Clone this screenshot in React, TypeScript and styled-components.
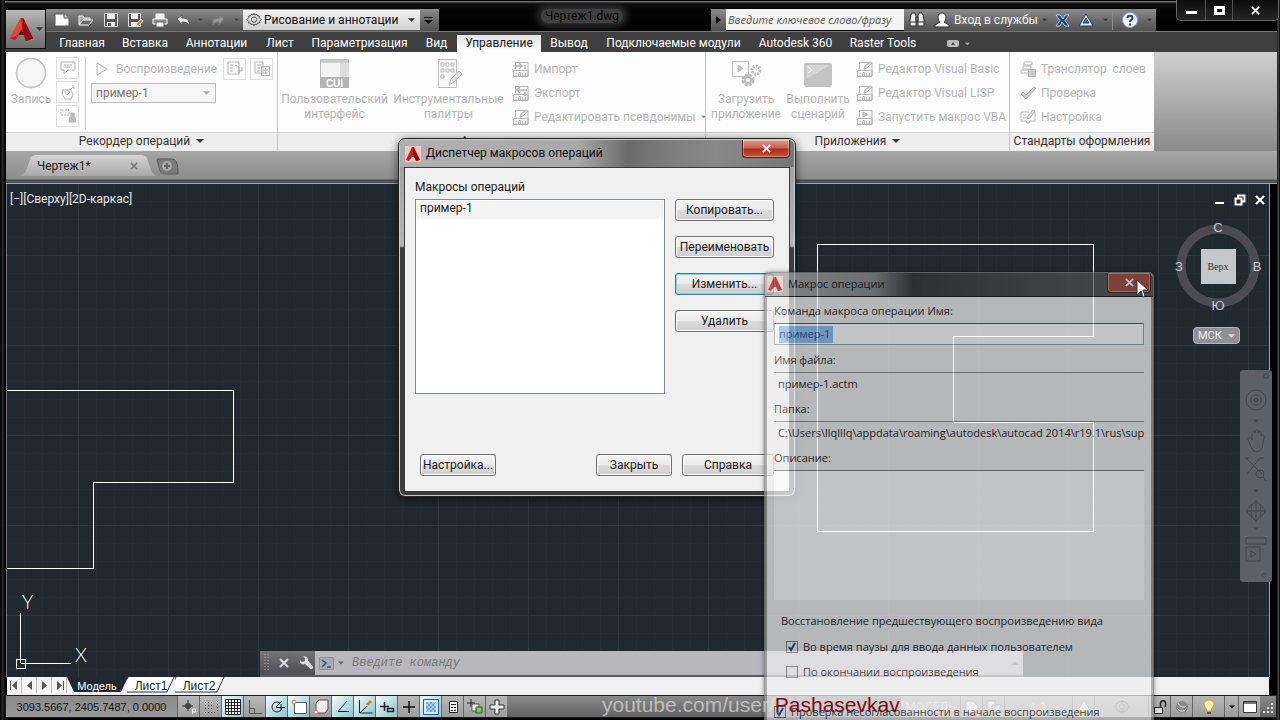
import React from "react";
import styled, { createGlobalStyle, css } from "styled-components";

const ui = `Roboto, "Open Sans", "Noto Sans", sans-serif`;
const humanist = `"Open Sans", "Noto Sans", sans-serif`;
const arial = `"Liberation Sans", Arial, sans-serif`;

const Global = createGlobalStyle`
  *, *::before, *::after { box-sizing: border-box; }
  body { margin: 0; background: #000; font-family: ${ui}; font-size: 12px; line-height: 16px; color: #222; }
  button, input, select, textarea { font: inherit; color: inherit; margin: 0; }
  svg { display: block; flex: none; }
`;

/* ---------- window frame ---------- */
const Desktop = styled.div`
  position: relative;
  display: flex;
  flex-direction: column;
  min-height: 100vh;
  overflow: hidden;
  padding: 0 3px 2px 5px;
  background: linear-gradient(90deg, #000 0, #2c2c2c 3px, #000 5px, #000 calc(100% - 3px), #555 calc(100% - 2px), #000 100%);
`;

const TitleBar = styled.header`
  display: flex;
  height: 32px;
  padding-top: 9px;
  background: linear-gradient(#000 0, #000 1px, #6e6e6e 1px, #6e6e6e 2px, #121212 3px, #050505 10px, #000 100%);
  border-bottom: 1px solid #777;
`;
const AppButton = styled.button`
  display: flex;
  align-items: center;
  justify-content: center;
  gap: 2px;
  position: relative;
  z-index: 2;
  width: 41px;
  height: 40px;
  flex: none;
  padding: 0;
  border: 1px solid #111;
  background: linear-gradient(#b9b9b9, #8f8f8f 50%, #6d6d6d);
`;
const ToolStrip = styled.div`
  display: flex;
  align-items: center;
  height: 22px;
  background: linear-gradient(#8c8c8c, #6c6c6c 50%, #505050);
`;
const QuickTools = styled(ToolStrip)`
  width: 393px;
  flex: none;
  padding-left: 4px;
`;
const ToolButton = styled.button<{ $w: number }>`
  display: flex;
  align-items: center;
  justify-content: center;
  width: ${(p) => p.$w}px;
  height: 22px;
  flex: none;
  padding: 0;
  border: 0;
  background: none;
`;
const Workspace = styled.label`
  display: flex;
  align-items: center;
  width: 177px;
  height: 20px;
  flex: none;
  padding: 0 5px 0 3px;
  gap: 2px;
  background: linear-gradient(#f2f2f2, #d0d0d0);
  color: #111;
`;
const BareSelect = styled.select`
  appearance: none;
  flex: 1;
  min-width: 0;
  padding: 0;
  border: 0;
  outline: 0;
  background: none;
`;
const DocTitle = styled.div`
  flex: 1;
  display: flex;
  justify-content: center;
  padding-left: 14px;
  line-height: 14px;
  color: #050505;
  span { height: 14px; padding: 0 4px; background: #404040; border-radius: 7px; box-shadow: 0 0 7px 4px #303030; }
`;
const SearchArrow = styled.button`
  width: 15px;
  height: 22px;
  padding: 0 4px;
  border: 0;
  background: linear-gradient(#8c8c8c, #505050);
`;
const Search = styled.input`
  width: 178px;
  height: 21px;
  padding: 0 2px;
  border: 0;
  background: #f4f4f4;
  font-family: ${humanist};
  font-size: 11px;
  font-style: italic;
  &::placeholder { color: #555; opacity: 1; }
`;
const InfoTools = styled(ToolStrip)`
  width: 252px;
  color: #f4f4f4;
`;
const StripLine = styled.span`
  width: 1px;
  height: 20px;
  background: #8b8b8b;
`;
const SignIn = styled.button`
  width: 84px;
  padding: 0;
  border: 0;
  background: none;
  color: #f4f4f4;
  white-space: nowrap;
`;
const WindowButtons = styled.div`
  display: flex;
  height: 21px;
  margin: -9px -2px 0 20px;
  border: 1px solid #6a6a6a;
  border-top: 0;
  border-radius: 0 0 5px 5px;
  background: linear-gradient(#0c0c0c, #252525);
`;
const WindowButton = styled.button<{ $w: number }>`
  display: flex;
  align-items: center;
  justify-content: center;
  width: ${(p) => p.$w}px;
  padding: 0;
  border: 0;
  border-right: 1px solid #555;
  background: none;
  &:last-child { border-right: 0; }
`;

/* ---------- ribbon ---------- */
const RibbonTabs = styled.nav`
  display: flex;
  height: 20px;
  padding-left: 45px;
  background: #3f3f3f;
`;
const RibbonTab = styled.button<{ $w: number; $active?: boolean }>`
  width: ${(p) => p.$w}px;
  height: 20px;
  padding: 2px 0 0;
  border: 0;
  background: none;
  color: #fff;
  white-space: nowrap;
  ${(p) => p.$active && css`
    height: 17px;
    margin: 3px 0 0;
    padding: 0 0 1px;
    background: linear-gradient(#e2e2e2, #fff);
    color: #222;
  `}
`;
const RibbonToggle = styled.button`
  display: flex;
  align-items: center;
  gap: 6px;
  margin-left: 22px;
  padding: 3px 0 0;
  border: 0;
  background: none;
`;
const Ribbon = styled.section`
  display: flex;
  height: 99px;
  margin-left: 1px;
  background: linear-gradient(#cecece, #8b8b8b);
  color: #b4b4b4;
`;
const Panel = styled.div<{ $w: number }>`
  display: flex;
  flex-direction: column;
  width: ${(p) => p.$w}px;
  flex: none;
  background: #fdfdfd;
  border-left: 1px solid #c4c4c4;
  &:first-child { border-left: 0; }
`;
const PanelBody = styled.div`
  display: flex;
  flex: 1;
  padding-top: 5px;
`;
const PanelTitle = styled.button`
  display: flex;
  align-items: center;
  justify-content: center;
  gap: 6px;
  height: 19px;
  padding: 0 0 2px;
  border: 0;
  border-top: 1px solid #d2d2d2;
  background: #eee;
  color: #333;
  white-space: nowrap;
`;
const BigButton = styled.button<{ $w: number }>`
  display: flex;
  flex-direction: column;
  align-items: center;
  width: ${(p) => p.$w}px;
  flex: none;
  padding: 0;
  border: 0;
  background: none;
  line-height: 15px;
  svg { margin-bottom: 3px; }
`;
const Column = styled.div<{ $pad?: number; $gap?: number }>`
  display: flex;
  flex-direction: column;
  gap: ${(p) => p.$gap ?? 0}px;
  padding-left: ${(p) => p.$pad ?? 0}px;
`;
const ListButton = styled.button`
  display: flex;
  align-items: center;
  gap: 5px;
  height: 24px;
  padding: 0;
  border: 0;
  background: none;
  white-space: pre;
`;
const MiniButton = styled.button`
  display: flex;
  align-items: center;
  justify-content: center;
  width: 23px;
  height: 22px;
  flex: none;
  padding: 0;
  border: 1px solid #dedede;
  background: #fcfcfc;
`;
const Divider = styled.span`
  width: 1px;
  height: 72px;
  margin: 0 5px 0 6px;
  background: #ccc;
`;
const PlayRow = styled.div`
  display: flex;
  align-items: center;
  gap: 4px;
  height: 23px;
`;
const PlayButton = styled(ListButton)`
  width: 128px;
  padding-left: 4px;
  gap: 7px;
`;
const MacroSelect = styled.label`
  display: flex;
  align-items: center;
  width: 125px;
  height: 20px;
  padding: 0 5px 0 4px;
  border: 1px solid #bbb;
  background: #f6f6f6;
  color: #777;
`;

/* ---------- drawing tabs and canvas ---------- */
const FileTabs = styled.nav`
  display: flex;
  align-items: flex-end;
  height: 33px;
  margin-left: 1px;
  padding: 0 0 7px 14px;
  border-bottom: 1px solid #a5a5a5;
  background: linear-gradient(#a6a6a6 0, #8c8c8c 28px, #4a4d50 29px, #55585c 100%);
`;
const FileTab = styled.div`
  position: relative;
  display: flex;
  align-items: center;
  justify-content: space-between;
  width: 136px;
  height: 21px;
  padding: 0 18px 0 17px;
  color: #222;
  background: linear-gradient(#d4d4d4, #a8a8a8);
  clip-path: polygon(0 100%, 4% 82%, 8% 10%, 11% 0, 90% 0, 93% 10%, 97% 82%, 100% 100%);
`;
const IconButton = styled.button`
  display: flex;
  padding: 0;
  border: 0;
  background: none;
`;
const Canvas = styled.main`
  position: relative;
  flex: 1;
  min-height: 480px;
  margin: 0 8px 0 2px;
  background-color: #212830;
  background-image:
    repeating-linear-gradient(90deg, transparent 0 71px, #2d3742 71px 72px, transparent 72px 90px),
    repeating-linear-gradient(0deg, transparent 0 61px, #2d3742 61px 62px, transparent 62px 90px),
    repeating-linear-gradient(90deg, transparent 0 17px, #242d36 17px 18px),
    repeating-linear-gradient(0deg, transparent 0 7px, #242d36 7px 8px, transparent 8px 18px);
  box-shadow: 1px 0 0 #a0a0a0, -1px 0 0 #777;
  color: #eee;
`;
const Drawing = styled.svg`
  position: absolute;
  left: 0;
  top: 0;
`;
const UcsIcon = styled.svg`
  position: absolute;
  left: 0;
  bottom: 0;
`;
const ViewLabel = styled.button`
  position: absolute;
  left: 3px;
  top: 7px;
  padding: 0;
  border: 0;
  background: none;
  color: #e8e8e8;
`;
const ViewControls = styled.div`
  position: absolute;
  right: 3px;
  top: 10px;
  display: flex;
  gap: 8px;
`;
const ViewCube = styled.svg`
  position: absolute;
  right: 4px;
  top: 34px;
`;
const UcsMenu = styled.button`
  position: absolute;
  right: 29px;
  top: 143px;
  display: flex;
  align-items: center;
  justify-content: space-between;
  width: 47px;
  height: 17px;
  padding: 0 4px;
  border: 1px solid #b5b5bd;
  border-radius: 4px;
  background: #8f8f98;
  color: #eee;
  font-size: 11px;
`;
const NavBar = styled.div`
  position: absolute;
  right: -3px;
  top: 186px;
  width: 32px;
  height: 212px;
  border-radius: 3px;
  background: #5b6069;
`;
const CommandLine = styled.div`
  position: absolute;
  left: 253px;
  right: 246px;
  bottom: 0;
  display: flex;
  height: 26px;
  border-bottom: 2px solid #5c5c5c;
  background: #b7b7bd;
`;
const CommandTools = styled.div`
  display: flex;
  align-items: center;
  gap: 10px;
  width: 55px;
  padding-left: 4px;
  background: linear-gradient(#74747a, #4c4c52);
`;
const CommandPrompt = styled.label`
  display: flex;
  flex: 1;
  align-items: center;
  gap: 4px;
  padding: 0 4px;
`;
const CommandInput = styled.input`
  flex: 1;
  min-width: 0;
  padding: 0 4px;
  border: 0;
  outline: 0;
  background: none;
  font-family: "Liberation Mono", monospace;
  font-style: italic;
  &::placeholder { color: #777; opacity: 1; }
`;

/* ---------- bottom bars ---------- */
const LayoutTabs = styled.nav`
  display: flex;
  height: 18px;
  margin: 0 8px 0 2px;
  background: #f0f0f0;
  font-family: ${arial};
`;
const NavArrow = styled.button`
  display: flex;
  align-items: center;
  justify-content: center;
  width: 15px;
  height: 16px;
  padding: 0;
  border: 0;
  border-right: 1px solid #bbb;
  background: #f4f4f4;
`;
const LayoutTab = styled.button<{ $active?: boolean }>`
  position: relative;
  height: 17px;
  width: ${(p) => (p.$active ? 60 : 48)}px;
  padding: 0;
  border: 0;
  background: none;
  font-size: ${(p) => (p.$active ? 11 : 12)}px;
  color: ${(p) => (p.$active ? "#fff" : "#222")};
  svg { position: absolute; left: 0; top: 0; }
  span { position: relative; }
`;
const StatusBar = styled.footer`
  display: flex;
  align-items: center;
  height: 23px;
  border: 1px solid #1c1c1c;
  background: linear-gradient(#8a8a8a, #626262);
`;
const Coordinates = styled.button`
  width: 171px;
  height: 21px;
  padding: 0;
  border: 0;
  background: linear-gradient(#8a8a8a, #989898);
  font-family: ${arial};
  font-size: 11px;
  color: #111;
`;
const StatusButton = styled.button<{ $on?: boolean; $w?: number }>`
  display: flex;
  align-items: center;
  justify-content: center;
  width: ${(p) => p.$w ?? 22}px;
  height: 21px;
  flex: none;
  padding: 0;
  border: 0;
  border-left: 1px solid #666;
  color: #ddd;
  background: ${(p) => (p.$on ? "linear-gradient(135deg, #f2fafb, #8fc3cf)" : "linear-gradient(#b8b8b8, #9c9c9c)")};
`;
const StatusGroup = styled.div`
  display: flex;
  align-items: center;
`;
const StatusEnd = styled(StatusGroup)`
  margin-left: auto;
`;
const Watermark = styled.a`
  position: absolute;
  left: 602px;
  bottom: 3px;
  z-index: 5;
  font-family: ${arial};
  font-size: 21px;
  line-height: 24px;
  text-decoration: none;
  color: rgba(235, 235, 235, 0.6);
  span { color: #7c0a1c; }
`;

/* ---------- dialogs ---------- */
const Dialog = styled.section<{ $x: number; $y: number; $w: number; $faded?: boolean }>`
  position: absolute;
  left: ${(p) => p.$x}px;
  top: ${(p) => p.$y}px;
  z-index: 3;
  width: ${(p) => p.$w}px;
  padding: 0 5px 4px;
  border: 1px solid #222;
  border-radius: 7px;
  box-shadow: inset 0 0 0 1px #c8c8c8, 0 2px 10px rgba(0, 0, 0, 0.6);
  background: linear-gradient(#999 0, #aaa 60px, #b5b5b5 107px, #3d3d3d 109px);
  color: #1c1c1c;
  ${(p) => p.$faded && css`
    opacity: 0.72;
    padding: 0 2px 4px;
    border-color: #777;
    border-radius: 5px;
    box-shadow: 0 0 4px rgba(0, 0, 0, 0.6);
    background: #999;
    font-family: ${humanist};
    font-size: 11px;
  `}
`;
const DialogTitle = styled.header<{ $faded?: boolean }>`
  display: flex;
  align-items: flex-start;
  gap: 5px;
  height: ${(p) => (p.$faded ? 24 : 27)}px;
  margin: 1px -4px 0;
  padding: 0 0 0 5px;
  border-radius: 6px 6px 0 0;
  background: linear-gradient(90deg, #b0b0b0 0, #a9a9a9 45%, #6b6b6b 58%, #7d7d7d 68%, #888 80%, #777 100%);
  ${(p) => p.$faded && css`
    margin: 0 -2px;
    padding-left: 2px;
    border-bottom: 1px solid #111;
    background: linear-gradient(90deg, #aaa 0, #888 28%, #333 38%, #484848 70%, #555 100%);
  `}
`;
const DialogName = styled.h2<{ $faded?: boolean }>`
  flex: 1;
  margin: ${(p) => (p.$faded ? 3 : 5)}px 0 0;
  font-size: inherit;
  font-weight: 400;
  line-height: 16px;
  color: #111;
`;
const DialogLogo = styled.span<{ $faded?: boolean }>`
  margin-top: ${(p) => (p.$faded ? 3 : 6)}px;
`;
const CloseButton = styled.button<{ $faded?: boolean }>`
  display: flex;
  align-items: center;
  justify-content: center;
  width: ${(p) => (p.$faded ? 44 : 48)}px;
  height: 18px;
  margin-right: 4px;
  padding: 0;
  border: 1px solid #4a1d18;
  border-top: 0;
  border-radius: 0 0 4px 4px;
  box-shadow: inset 0 0 0 1px rgba(255, 255, 255, 0.35);
  background: linear-gradient(#d99b90 0, #c6614f 48%, #b22c16 52%, #c5543a 100%);
  ${(p) => p.$faded && css`
    height: 20px;
    margin-right: 2px;
    background: #a04a40;
  `}
`;
const DialogBody = styled.div`
  display: flex;
  flex-direction: column;
  padding: 10px 15px 15px 10px;
  border: 1px solid #3a3a3a;
  background: #f0f0f0;
`;
const MacroHeading = styled.label`
  line-height: 18px;
`;
const MacroRow = styled.div`
  display: flex;
  justify-content: space-between;
  margin-top: 3px;
`;
const MacroList = styled.select`
  appearance: none;
  width: 250px;
  height: 195px;
  padding: 1px;
  border: 1px solid #828790;
  border-radius: 0;
  outline: 0;
  background: #fff;
  option { min-height: 18px; padding: 0 3px; line-height: 18px; background: #f3f3f3; color: #1c1c1c; }
`;
const PushButton = styled.button<{ $w: number; $focus?: boolean }>`
  width: ${(p) => p.$w}px;
  height: 22px;
  padding: 0;
  border: 1px solid ${(p) => (p.$focus ? "#2e7f92" : "#707070")};
  border-radius: 3px;
  box-shadow: inset 0 0 0 1px ${(p) => (p.$focus ? "#8fd6e6" : "#fbfbfb")};
  background: linear-gradient(#f3f3f3 0, #ebebeb 48%, #dcdcdc 52%, #cfcfcf 100%);
  line-height: 18px;
  white-space: nowrap;
`;
const DialogActions = styled.div`
  display: flex;
  gap: 10px;
  margin: 60px 0 0 5px;
  button:first-child { margin-right: auto; }
`;

const MacroForm = styled.form`
  display: flex;
  flex-direction: column;
  height: 440px;
  padding: 2px 7px 0;
  background: #eee;
`;
const Field = styled.label`
  display: flex;
  flex-direction: column;
  margin-bottom: 3px;
  line-height: 24px;
`;
const FieldInput = styled.input<{ $plain?: boolean }>`
  height: 22px;
  padding: 0 4px;
  border: 1px solid #999;
  outline: 0;
  background: #fff;
  ${(p) => p.$plain && css`
    padding: 0 0 0 4px;
    border-width: 1px 0 0;
    border-color: #888;
    background: none;
  `}
`;
const SelectedField = styled.div`
  display: flex;
  align-items: center;
  height: 22px;
  padding: 0 4px;
  border: 1px solid #8aa;
  border-top-color: #456;
  background: #fff;
  input { width: 54px; height: 17px; padding: 0; border: 0; outline: 0; background: #8fbdf0; color: #1e4a90; }
`;
const Description = styled.textarea`
  height: 130px;
  border: 0;
  border-top: 1px solid #777;
  outline: 0;
  resize: none;
  background: #fff;
`;
const Restore = styled.fieldset`
  margin: 5px 0 0;
  padding: 0 0 0 12px;
  border: 0;
`;
const RestoreTitle = styled.legend`
  margin-left: -7px;
  padding: 0 0 0 2px;
  line-height: 26px;
`;
const CheckRow = styled.label`
  display: flex;
  align-items: center;
  gap: 5px;
  height: 25px;
`;
const CheckLast = styled(CheckRow)`
  margin-top: 15px;
`;
const Check = styled.input`
  appearance: none;
  width: 12px;
  height: 12px;
  border: 1px solid #777;
  background: #eee;
  &:checked {
    background: #eee url("data:image/svg+xml,%3Csvg xmlns='http://www.w3.org/2000/svg' viewBox='0 0 10 10'%3E%3Cpath d='M2 5l2 3 4-7' fill='none' stroke='%23203a80' stroke-width='2'/%3E%3C/svg%3E");
  }
`;
const Pointer = styled.svg`
  position: absolute;
  left: 1135px;
  top: 279px;
  z-index: 6;
`;

/* ---------- drawings ---------- */
type IconProps = { w?: number; h?: number; box?: string; children: React.ReactNode; stroke?: string; fill?: string };
const Icon = ({ w = 16, h = 16, box, children, stroke = "none", fill = "none" }: IconProps) => (
  <svg width={w} height={h} viewBox={box ?? `0 0 ${w} ${h}`} stroke={stroke} fill={fill} aria-hidden>
    {children}
  </svg>
);
const Caret = ({ color = "#333", w = 7 }: { color?: string; w?: number }) => (
  <Icon w={w} h={4} box="0 0 8 4" fill={color}><path d="M0 0h8L4 4z" /></Icon>
);
const Cross = ({ color = "#fff", size = 9, width = 2 }: { color?: string; size?: number; width?: number }) => (
  <Icon w={size} h={size} box="0 0 10 10" stroke={color}><path d="M1 1l8 8M9 1L1 9" strokeWidth={width} /></Icon>
);
const Logo = ({ size = 26 }: { size?: number }) => (
  <Icon w={size} h={size} box="0 0 26 28">
    <path d="M12 1h3l11 23-8 3-3-7h-5l-4 6-6-2z" fill="#c9201b" />
    <path d="M12 1l2 12-5 7-9 4z" fill="#e6453a" />
    <path d="M15 1l11 23-8 3-4-14z" fill="#8d0f10" />
    <path d="M10 20l3-6 3 6z" fill="#4e0808" />
  </Icon>
);
const BadgeLogo = () => (
  <Icon w={16} h={16}>
    <path d="M0 0h16v16H0z" fill="#e9c9c7" />
    <path d="M7 1h2l6 13-4 1-2-4H7l-3 4-3-1z" fill="#c4201d" />
    <path d="M8 1l7 13-4 1-3-7z" fill="#7f0d0e" />
  </Icon>
);
const gearPath = "M8 1l1 2 2-1 1 2 2 0v2l2 2-2 2v2l-2 0-1 2-2-1-1 2-1-2-2 1-1-2-2 0v-2L0 8l2-2V4l2 0 1-2 2 1z";
const Gear = ({ color = "#444", size = 16 }: { color?: string; size?: number }) => (
  <Icon w={size} h={size} box="-1 0 18 17" stroke={color}><path d={gearPath} /><circle cx="8" cy="8" r="3" /></Icon>
);
const Doc = ({ kind }: { kind: "import" | "export" | "edit" | "run" }) => (
  <Icon w={16} h={16} stroke="#b4b4b4">
    <path d="M2.500 8V1.500h12.500V15M.500 9.500h14.500v6H.500z" />
    <path d="M3 15v-3.500M5.500 15v-3.500h2V15M9.500 11.500V15h3v-3.500" />
    {kind === "import" && <path d="M0 5h8M6 2l3 3-3 3M12 4v4" strokeWidth="1.500" />}
    {kind === "export" && <path d="M5 5h9M7 2L4 5l3 3M12 7v4" strokeWidth="1.500" />}
    {kind === "edit" && <path d="M7 8l1-3 5-4 2 1-5 5z" fill="#ddd" />}
    {kind === "run" && <path d="M6 3v5l5-2.500z" fill="#c4c4c4" />}
  </Icon>
);

const QuickIcons = () => (
  <>
    <ToolButton $w={24} aria-label="Создать"><Icon w={16} h={14}><path d="M1 1h9l5 4v8H1z" fill="#fff" stroke="#555" /><path d="M10 1v4h5" fill="#ccc" stroke="#555" /></Icon></ToolButton>
    <ToolButton $w={24} aria-label="Открыть"><Icon w={16} h={13}><path d="M1 11V2h4l1 2h6v2" fill="#aaa" stroke="#eee" /><path d="M1 11l4-5h10l-4 5z" fill="#666" stroke="#fff" /></Icon></ToolButton>
    <ToolButton $w={25} aria-label="Сохранить"><Icon w={14} h={14}><path d="M.5.500h13v13H.500z" fill="#555" stroke="#ddd" /><path d="M3 1h8v5H3zM3 9h8v4H3z" fill="#eee" /><path d="M4 10h3v3H4z" fill="#555" /></Icon></ToolButton>
    <ToolButton $w={25} aria-label="Сохранить как"><Icon w={16} h={15}><path d="M.5.500h12v13H.500z" fill="#555" stroke="#ddd" /><path d="M3 1h7v5H3zM3 9h6v4H3z" fill="#eee" /><path d="M8 13l1-3 4-4 2 2-4 4z" fill="#c77f4a" stroke="#eed" /></Icon></ToolButton>
    <ToolButton $w={23} aria-label="Печать"><Icon w={16} h={15}><path d="M4 1h8v5H4z" fill="#eee" stroke="#fff" /><path d="M1 6h14v5H1z" fill="#888" stroke="#fff" /><path d="M4 9h8v5H4z" fill="#fff" stroke="#666" /></Icon></ToolButton>
    <ToolButton $w={24} aria-label="Отменить"><Icon w={15} h={13}><path d="M1 5l5-4v3c5 0 8 2 7 8-1-3-3-4-7-4v3z" fill="#eee" stroke="#555" /></Icon></ToolButton>
    <ToolButton $w={11} aria-label="Список отмены"><Caret color="#444" w={5} /></ToolButton>
    <ToolButton $w={24} aria-label="Повторить"><Icon w={14} h={12}><path d="M13 5L8 1v3C3 4 1 6 2 11c1-2 2-3 6-3v3z" fill="#999" stroke="#777" /></Icon></ToolButton>
    <ToolButton $w={13} aria-label="Список повтора"><Caret color="#444" w={5} /></ToolButton>
  </>
);

const tabs: [string, number][] = [
  ["Главная", 64], ["Вставка", 62], ["Аннотации", 81], ["Лист", 46], ["Параметризация", 113], ["Вид", 41],
  ["Управление", 84], ["Вывод", 56], ["Подключаемые модули", 153], ["Autodesk 360", 91], ["Raster Tools", 84],
];

const statusIcons: { name: string; on?: boolean; art: React.ReactNode }[] = [
  { name: "Выведенные зависимости", art: <g stroke="#222"><path d="M1 7h11M7 1v11M5 5h4v4H5z" /><path d="M11.500 15v-5h3v3h-3" stroke="#eee" /></g> },
  { name: "Шаг", art: <path d="M2 3.500h9M2 6.500h9M2 9.500h9M2 13.500h12M14.500 2v10" stroke="#222" strokeDasharray="1 2" /> },
  { name: "Сетка", on: true, art: <path d="M.5.500h15v15H.500zM3.500 0v16M6.500 0v16M9.500 0v16M12.500 0v16M0 3.500h16M0 6.500h16M0 9.500h16M0 12.500h16" stroke="#222" fill="#fff" /> },
  { name: "Орто", art: <path d="M2.500 1v13.500H15M2.500 9.500h5v5" stroke="#555" /> },
  { name: "Полярное", on: true, art: <path d="M13 8a5 5 0 1 1-2-4M7 8l6-6M7 8.500h9M12 5v6" stroke="#222" /> },
  { name: "Привязка", on: true, art: <g><path d="M3.500 3.500h12v11h-12z" fill="#fff" stroke="#555" /><circle cx="3" cy="3" r="2" fill="#fff" stroke="#b87a4a" /></g> },
  { name: "3D привязка", art: <g><path d="M3 4l3-3h9v9l-3 4H3z" fill="#eee" stroke="#555" /><circle cx="3" cy="13" r="2" fill="#fff" stroke="#c77f4a" /></g> },
  { name: "Отслеживание", on: true, art: <path d="M12 2L3 12.500h11" stroke="#222" /> },
  { name: "ДПСК", on: true, art: <g stroke="#222"><path d="M2.500 1v13h13M3 14L10 7" /><path d="M10 6l4-4" stroke="#d98b2b" strokeWidth="3" /></g> },
  { name: "Динамический ввод", on: true, art: <path d="M1 7.500h9M5.500 3v9M8.500 9.500h6v3h-6z" stroke="#222" strokeWidth="1.500" /> },
  { name: "Вес линий", art: <path d="M2 8h12M8 2v12" stroke="#111" strokeWidth="1.500" /> },
  { name: "Прозрачность", on: true, art: <g><path d="M.5.500h15v15H.500z" fill="#dcecf8" stroke="#1f5f9a" /><path d="M3 3h10v10H3z" fill="#a4cdf0" /><path d="M3 5l2-2M3 9l6-6M3 13L13 3M7 13l6-6M11 13l2-2M3 3l10 10M3 7l6 6M7 3l6 6" stroke="#6ea2d0" /></g> },
  { name: "Быстрые свойства", art: <g><path d="M4.500 2.500h8v11h-8z" fill="#fff" stroke="#222" /><path d="M6 5.500h5M6 8.500h2M9 8.500h2M6 11.500h2M9 11.500h2" stroke="#222" /></g> },
  { name: "Циклический выбор", art: <g><path d="M0 4h8M4 0v8" stroke="#222" /><path d="M5 5h7v7H5z" fill="#eee" stroke="#555" /><path d="M9 8h6v6H9z" fill="#7fbf6a" stroke="#2b5a24" /></g> },
  { name: "Монитор аннотаций", art: <path d="M6 1h4v5h5v4h-5v5H6v-5H1V6h5z" fill="#f2f2f2" stroke="#333" /> },
];

export default function App() {
  return (
    <>
      <Global />
      <Desktop>
        <TitleBar>
          <AppButton aria-label="Меню приложения"><Logo size={25} /><Caret w={7} /></AppButton>
          <QuickTools>
            <QuickIcons />
            <Workspace>
              <Gear />
              <BareSelect aria-label="Рабочее пространство"><option>Рисование и аннотации</option></BareSelect>
              <Caret />
            </Workspace>
            <ToolButton $w={17} aria-label="Настройка панели"><Icon w={9} h={7} fill="#111"><path d="M0 0h9v1H0zM0 3h9L4.500 7z" /></Icon></ToolButton>
          </QuickTools>
          <DocTitle><span>Чертеж1.dwg</span></DocTitle>
          <SearchArrow aria-label="Свернуть поиск"><Icon w={6} h={8} fill="#111"><path d="M1 0l5 4-5 4z" /></Icon></SearchArrow>
          <Search aria-label="Поиск" placeholder="Введите ключевое слово/фразу" />
          <InfoTools>
            <ToolButton $w={25} aria-label="Найти"><Icon w={16} h={16} fill="#eee" stroke="#333"><path d="M2 3l1-2h3l1 3v10H1V8zM14 3l-1-2h-3L9 4v10h6V8zM7 5h2v4H7zM1 10h6M9 10h6" /></Icon></ToolButton>
            <ToolButton $w={25} aria-label="Профиль"><Icon w={16} h={16} fill="#f4f4f4" stroke="#333"><path d="M8 1c3 0 4 2 4 4 0 3-1 4-2 5l5 3v2H1v-2l5-3C5 9 4 8 4 5c0-2 1-4 4-4z" /></Icon></ToolButton>
            <SignIn>Вход в службы</SignIn>
            <ToolButton $w={12} aria-label="Меню входа"><Caret color="#333" w={5} /></ToolButton>
            <ToolButton $w={24} aria-label="Exchange"><Icon w={15} h={13}><path d="M1 1h4l3 4 2-4h4l-4 5.500 4 5.500h-4L7 8l-2 4H1l4-5.500z" fill="#1f3f86" stroke="#b9cbea" /></Icon></ToolButton>
            <ToolButton $w={24} aria-label="Autodesk 360"><Icon w={16} h={14}><path d="M8 1l3 5 4 7H1l4-7zM8 5l-3 5h6z" fill="#dfe8f8" stroke="#1f3f86" fillRule="evenodd" /></Icon></ToolButton>
            <ToolButton $w={14} aria-label="Ещё"><Caret color="#333" w={5} /></ToolButton>
            <StripLine />
            <ToolButton $w={34} aria-label="Справка"><Icon w={16} h={16}><circle cx="8" cy="8" r="7.500" fill="#f0f5ff" stroke="#8ba3cf" /><path d="M5.500 6c0-3 5-3 5 0 0 2-2.500 2-2.500 4M8 11.500v2" stroke="#1f3f86" strokeWidth="2" /></Icon></ToolButton>
            <Caret color="#333" w={5} />
          </InfoTools>
          <WindowButtons>
            <WindowButton $w={29} aria-label="Свернуть"><Icon w={11} h={8} fill="#fff"><path d="M0 5h11v3H0z" /></Icon></WindowButton>
            <WindowButton $w={27} aria-label="Развернуть"><Icon w={11} h={9}><path d="M1.500 1.500h8v6h-8z" stroke="#fff" strokeWidth="3" /></Icon></WindowButton>
            <WindowButton $w={45} aria-label="Закрыть"><Cross /></WindowButton>
          </WindowButtons>
        </TitleBar>

        <RibbonTabs>
          {tabs.map(([name, w]) => <RibbonTab key={name} $w={w} $active={name === "Управление"}>{name}</RibbonTab>)}
          <RibbonToggle aria-label="Свернуть ленту">
            <Icon w={12} h={7}><rect width="12" height="7" rx="2" fill="#bbb" /><path d="M4 5l2-3 2 3z" fill="#444" /></Icon>
            <Caret color="#aaa" w={5} />
          </RibbonToggle>
        </RibbonTabs>

        <Ribbon>
          <Panel $w={271}>
            <PanelBody>
              <BigButton $w={50}>
                <Icon w={32} h={32}><circle cx="16" cy="16" r="14.500" fill="#f6f6f6" stroke="#c2c2c2" strokeWidth="1.500" /></Icon>
                Запись
              </BigButton>
              <Column $gap={2}>
                <MiniButton aria-label="Вставить сообщение"><Icon stroke="#b4b4b4"><path d="M1 2h14v8H8l-4 4v-4H1zM4 5h8M4 7h6" /></Icon></MiniButton>
                <MiniButton aria-label="Базовая точка"><Icon stroke="#b4b4b4"><path d="M2 6h8l3-3M3 6l-1 4 3 5h6l2-5-3-5M5 8l2 3 3-3-3-2zM13 1v3h2" /></Icon></MiniButton>
                <MiniButton aria-label="Запрос ввода"><Icon stroke="#b4b4b4"><path d="M1 1v6h8V2H1" strokeDasharray="2 1" /><path d="M11 5h3v4h1l1 5H9l1-5h1z" fill="#bbb" /></Icon></MiniButton>
              </Column>
              <Divider />
              <Column $gap={3}>
                <PlayRow>
                  <PlayButton><Icon w={14} h={14} stroke="#b4b4b4"><path d="M2 1l10 6-10 6z" /></Icon>Воспроизведение</PlayButton>
                  <MiniButton aria-label="Параметры"><Icon stroke="#b4b4b4"><path d="M1 1h11v12H1zM3 4h3M3 7h3M3 10h3M8 4l4 2v8M10 10h5V6" /></Icon></MiniButton>
                  <MiniButton aria-label="Диспетчер"><Icon stroke="#b4b4b4"><path d="M1 1h8v11H1zM3 4h5M3 7h3M3 10h3M7.500 5.500h8v9h-8zM9 9h5M9 12h5M11.500 7v6" /></Icon></MiniButton>
                </PlayRow>
                <MacroSelect>
                  <BareSelect aria-label="Доступный макрос"><option>пример-1</option></BareSelect>
                  <Caret color="#aaa" />
                </MacroSelect>
              </Column>
            </PanelBody>
            <PanelTitle>Рекордер операций <Caret w={8} /></PanelTitle>
          </Panel>

          <Panel $w={428}>
            <PanelBody>
              <BigButton $w={113}>
                <Icon w={32} h={32}><path d="M1.500 2.500h28v18h-28z" fill="#f4f4f4" stroke="#bbb" /><path d="M2 3h27v3H2z" fill="#ccc" /><path d="M21 6h9v14h-9z" fill="#ddd" /><path d="M1 20h29v11H1z" fill="#b4b4b4" /><text x="15.500" y="29.500" textAnchor="middle" fontFamily="Liberation Sans" fontWeight="700" fontSize="10" fill="#fff">CUI</text></Icon>
                Пользовательский<br />интерфейс
              </BigButton>
              <BigButton $w={115}>
                <Icon w={32} h={32} stroke="#bbb"><path d="M5.500 2.500h18v28h-18z" fill="#f8f8f8" /><path d="M8 6h3v3H8zM13 6h3v3h-3zM18 6h3v3h-3zM8 12h3v3H8zM13 12h3v3h-3zM18 12h3v3h-3zM8 18h3v3H8z" /><path d="M16 28l2-6 8-8 3 3-8 8z" fill="#ddd" /></Icon>
                Инструментальные<br />палитры
              </BigButton>
              <Column $pad={7}>
                <ListButton><Doc kind="import" />Импорт</ListButton>
                <ListButton><Doc kind="export" />Экспорт</ListButton>
                <ListButton><Doc kind="edit" />Редактировать псевдонимы<Caret color="#888" w={5} /></ListButton>
              </Column>
            </PanelBody>
            <PanelTitle>Адаптация</PanelTitle>
          </Panel>

          <Panel $w={304}>
            <PanelBody>
              <BigButton $w={80}>
                <Icon w={32} h={32} stroke="#bbb"><path d="M2.500 4.500h16v15h-16z" fill="#fafafa" /><path d="M8 8v7l5-3.500z" fill="#c4c4c4" /><circle cx="18" cy="23" r="5" strokeWidth="3" strokeDasharray="3 1" /><circle cx="18" cy="23" r="3" strokeWidth="2" /><circle cx="26" cy="13" r="4" strokeWidth="3" strokeDasharray="2 1" /></Icon>
                Загрузить<br />приложение
              </BigButton>
              <BigButton $w={64}>
                <Icon w={32} h={32}><rect x="2" y="6" width="28" height="24" rx="2" fill="#c4c4c4" /><path d="M4 8h24L5 22z" fill="#d6d6d6" /><path d="M6 10l4 3-4 3" stroke="#fff" /></Icon>
                Выполнить<br />сценарий
              </BigButton>
              <Column $pad={7}>
                <ListButton><Doc kind="edit" />Редактор Visual Basic</ListButton>
                <ListButton><Doc kind="edit" />Редактор Visual LISP</ListButton>
                <ListButton><Doc kind="run" />Запустить макрос VBA</ListButton>
              </Column>
            </PanelBody>
            <PanelTitle>Приложения <Caret w={8} /></PanelTitle>
          </Panel>

          <Panel $w={145}>
            <PanelBody>
              <Column $pad={10}>
                <ListButton><Icon stroke="#b4b4b4"><path d="M4 1h8v3H4zM3 5h8v3H3zM1 9h8v3H1z" /><path d="M8.500 8.500h7v7h-7z" fill="#ccc" /></Icon>{"Транслятор  слоев"}</ListButton>
                <ListButton><Icon stroke="#b4b4b4"><path d="M1 9l2-2 3 3 8-8 2 1-10 11z" fill="#ccc" /></Icon>Проверка</ListButton>
                <ListButton><Icon stroke="#b4b4b4"><path d="M1 3h8M1 3v9h5l1 2h2l1-2h5V3M3 6h3M3 9h4" /><path d="M7 10l1-3 5-6 2 1-5 7z" fill="#ddd" /></Icon>Настройка</ListButton>
              </Column>
            </PanelBody>
            <PanelTitle>Стандарты оформления</PanelTitle>
          </Panel>
        </Ribbon>

        <FileTabs>
          <FileTab>Чертеж1*<IconButton aria-label="Закрыть чертёж"><Cross color="#777" size={8} /></IconButton></FileTab>
          <IconButton aria-label="Новый чертёж">
            <Icon w={24} h={18}><path d="M1 1h14c5 0 7 3 7 15H8C4 16 3 10 1 1z" fill="#7b7b7b" stroke="#5c5c5c" /><circle cx="11" cy="8" r="5" fill="#aaa" /><path d="M8 8h6M11 5v6" stroke="#666" strokeWidth="2" /></Icon>
          </IconButton>
        </FileTabs>

        <Canvas>
          <Drawing width="1100" height="400" fill="none" stroke="#fff" shapeRendering="crispEdges">
            <path d="M0 206.500H226.500V298.500H86.500V384.500H0" />
            <path d="M810.500 60.500H1086.500V152.500H946.500V238.500H1086.500V347.500H810.500z" />
          </Drawing>
          <UcsIcon width="90" height="86" fill="none" stroke="#fff">
            <path d="M13.500 22v50M14 72.500h50M9.500 68.500h9v9h-9z" shapeRendering="crispEdges" />
            <g fill="#fff" stroke="none" fontFamily="Lato, sans-serif" fontWeight="300" fontSize="19"><text x="15" y="18">Y</text><text x="68" y="71">X</text></g>
          </UcsIcon>
          <ViewLabel>[−][Сверху][2D-каркас]</ViewLabel>
          <ViewControls>
            <IconButton aria-label="Свернуть вид"><Icon w={12} h={12} fill="#fff"><path d="M1 8h9v2H1z" /></Icon></IconButton>
            <IconButton aria-label="Восстановить вид"><Icon w={12} h={12} stroke="#fff"><path d="M4 4V1.500h6.500v6H8M1.500 4.500h6v6h-6z" strokeWidth="2" /></Icon></IconButton>
            <IconButton aria-label="Закрыть вид"><Icon w={12} h={12} stroke="#fff"><path d="M2 2l8 8M10 2l-8 8" strokeWidth="2" /></Icon></IconButton>
          </ViewControls>
          <ViewCube width="92" height="96">
            <circle cx="45" cy="48" r="37" fill="none" stroke="#4b4b56" strokeWidth="9" />
            <path d="M28 31h35v35H28z" fill="#c3c6ca" />
            <g fill="#c8c8cc" fontFamily="Liberation Sans" fontSize="13" textAnchor="middle">
              <text x="45" y="14">С</text><text x="84" y="53">В</text><text x="45" y="92">Ю</text><text x="6" y="53">З</text>
              <text x="45" y="52" fontSize="10" fontFamily="Liberation Serif" fill="#333">Верх</text>
            </g>
          </ViewCube>
          <UcsMenu>МСК <Caret color="#ddd" w={7} /></UcsMenu>
          <NavBar>
            <Icon w={32} h={212} stroke="#43474f">
              <path d="M24 4h4v4h-4zM26 205a2 2 0 1 0 0 1" />
              <circle cx="16" cy="30" r="10" /><circle cx="16" cy="30" r="5" /><circle cx="16" cy="30" r="2" />
              <path d="M14 50h4l-2 2z" />
              <path d="M8 70c0-4 3-3 4 0v-7c1-2 3-2 3 0v-2c1-2 3-2 3 0v2c1-2 3-2 3 0v3c1-2 4-1 3 2l-2 10c-3 5-8 4-10 1z" />
              <path d="M6 88l16 16M20 88L7 104M5 88h4M20 88h4" /><circle cx="20" cy="104" r="4" /><path d="M23 107l3 4" />
              <path d="M14 120h4l-2 2z" />
              <path d="M6 141h20M16 130v22M12 134l-6 7 6 7M20 134l6 7-6 7" /><ellipse cx="16" cy="141" rx="5" ry="9" />
              <path d="M14 158h4l-2 2z" />
              <path d="M6 168h20v6H6zM6 177h14v14H6zM11 181v6l5-3z" />
            </Icon>
          </NavBar>
          <CommandLine>
            <CommandTools>
              <Icon w={5} h={18} stroke="#bbb"><path d="M1 0v18M4 0v18" strokeDasharray="1 2" /></Icon>
              <IconButton aria-label="Закрыть командную строку"><Cross color="#ddd" size={10} /></IconButton>
              <IconButton aria-label="Параметры командной строки"><Icon w={15} h={15}><path d="M1 4l2 2 3-1V2L4 .500c3-1 5 1 5 4l5 6c1 2-2 4-3 2L6 8C3 9 0 7 1 4z" fill="#ddd" /></Icon></IconButton>
            </CommandTools>
            <CommandPrompt>
              <Icon w={15} h={13}><path d="M.500.500h14v12H.500z" fill="#a3acb8" stroke="#8a8f98" /><path d="M3 3l4 3-4 4M8 10h4" stroke="#444c58" strokeWidth="1.500" /></Icon>
              <Caret color="#666" w={6} />
              <CommandInput aria-label="Команда" placeholder="Введите команду" />
              <Icon w={8} h={4} fill="#777"><path d="M0 4h8L4 0z" /></Icon>
            </CommandPrompt>
          </CommandLine>
        </Canvas>

        <LayoutTabs>
          <NavArrow aria-label="Первый лист"><Icon w={9} h={9} fill="#555"><path d="M0 0h1v9H0zM7 0v9L2 4.500z" /></Icon></NavArrow>
          <NavArrow aria-label="Предыдущий лист"><Icon w={9} h={9} fill="#555"><path d="M7 0v9L2 4.500z" /></Icon></NavArrow>
          <NavArrow aria-label="Следующий лист"><Icon w={9} h={9} fill="#555"><path d="M2 0v9l5-4.500z" /></Icon></NavArrow>
          <NavArrow aria-label="Последний лист"><Icon w={9} h={9} fill="#555"><path d="M8 0h1v9H8zM2 0v9l5-4.500z" /></Icon></NavArrow>
          <LayoutTab $active><Icon w={62} h={17}><path d="M0 0h61l-7 15H7z" fill="#212830" /></Icon><span>Модель</span></LayoutTab>
          <LayoutTab><Icon w={48} h={17} stroke="#333"><path d="M1 0l-7 15H40L47 0" fill="#fff" /></Icon><span>Лист1</span></LayoutTab>
          <LayoutTab><Icon w={53} h={17} stroke="#333"><path d="M1 0l-7 15H42L49 0" fill="#fff" /></Icon><span>Лист2</span></LayoutTab>
        </LayoutTabs>

        <StatusBar>
          <Coordinates>3093.5667, 2405.7487, 0.0000</Coordinates>
          <StatusGroup>
            {statusIcons.map((s) => <StatusButton key={s.name} $on={s.on} aria-label={s.name}><Icon>{s.art}</Icon></StatusButton>)}
          </StatusGroup>
          <StatusEnd>
            <StatusButton $w={60}>МОДЕЛЬ</StatusButton>
            <StatusButton aria-label="Быстрый просмотр листов"><Icon><path d="M2 2h7l5 5v7H2z" fill="#eee" stroke="#777" /></Icon></StatusButton>
            <StatusButton aria-label="Быстрый просмотр чертежей"><Icon><path d="M1 2h8v9H1zM6 6h9v8H6z" fill="#eee" stroke="#777" /></Icon></StatusButton>
            <StatusButton $w={68}>1:1</StatusButton>
            <StatusButton aria-label="Видимость аннотаций"><Icon><path d="M8 1l3 5 4 7H1l4-7z" fill="#eee" stroke="#777" /></Icon></StatusButton>
            <StatusButton $w={54} aria-label="Рабочее пространство"><Gear color="#555" /></StatusButton>
            <StatusButton aria-label="Блокировка"><Icon><path d="M2.500 8.500h8v6h-8z" fill="#ddd" stroke="#222" /><path d="M8.500 8V4c0-3 5-3 5 0v4" stroke="#222" strokeWidth="1.500" /></Icon></StatusButton>
            <StatusButton aria-label="Аппаратное ускорение"><Icon><circle cx="8" cy="8" r="6" fill="#888" /><path d="M4 4c2 4 5 5 8 3M3 9c3 4 6 4 9 1" stroke="#eee" /></Icon></StatusButton>
            <StatusButton $w={32} aria-label="Изоляция объектов"><Icon><path d="M8 1c3 0 5 2 5 4 0 3-3 4-3 7H6c0-3-3-4-3-7 0-2 2-4 5-4z" fill="#fff6a8" stroke="#b8a24a" /><path d="M6 13h4v2H6z" fill="#555" /></Icon></StatusButton>
            <StatusButton $w={14} aria-label="Меню строки состояния"><Caret color="#000" w={6} /></StatusButton>
            <StatusButton aria-label="Очистить экран"><Icon><path d="M1.500 2.500h13v11h-13z" fill="#fff" stroke="#333" /><path d="M2 3h12v2H2z" fill="#777" /></Icon></StatusButton>
            <Icon w={16} h={18} fill="#ddd"><path d="M11 5h2v2h-2zM7 9h2v2H7zM11 9h2v2h-2zM3 13h2v2H3zM7 13h2v2H7zM11 13h2v2h-2z" /></Icon>
          </StatusEnd>
        </StatusBar>

        <Dialog $x={398} $y={138} $w={398} aria-label="Диспетчер макросов операций">
          <DialogTitle>
            <DialogLogo><BadgeLogo /></DialogLogo>
            <DialogName>Диспетчер макросов операций</DialogName>
            <CloseButton aria-label="Закрыть окно"><Cross /></CloseButton>
          </DialogTitle>
          <DialogBody>
            <MacroHeading htmlFor="macros">Макросы операций</MacroHeading>
            <MacroRow>
              <MacroList id="macros" size={10}><option>пример-1</option></MacroList>
              <Column $gap={15}>
                <PushButton $w={99}>Копировать...</PushButton>
                <PushButton $w={99}>Переименовать</PushButton>
                <PushButton $w={99} $focus>Изменить...</PushButton>
                <PushButton $w={99}>Удалить</PushButton>
              </Column>
            </MacroRow>
            <DialogActions>
              <PushButton $w={76}>Настройка...</PushButton>
              <PushButton $w={76}>Закрыть</PushButton>
              <PushButton $w={92}>Справка</PushButton>
            </DialogActions>
          </DialogBody>
        </Dialog>

        <Dialog $x={764} $y={272} $w={390} $faded aria-label="Макрос операции">
          <DialogTitle $faded>
            <DialogLogo $faded><BadgeLogo /></DialogLogo>
            <DialogName $faded>Макрос операции</DialogName>
            <CloseButton $faded aria-label="Закрыть окно"><Cross /></CloseButton>
          </DialogTitle>
          <MacroForm>
            <Field>Команда макроса операции Имя:<SelectedField><input defaultValue="пример-1" /></SelectedField></Field>
            <Field>Имя файла:<FieldInput $plain readOnly value="пример-1.actm" /></Field>
            <Field>Папка:<FieldInput $plain readOnly value="C:\Users\llqlllq\appdata\roaming\autodesk\autocad 2014\r19.1\rus\support" /></Field>
            <Field>Описание:<Description /></Field>
            <Restore>
              <RestoreTitle>Восстановление предшествующего воспроизведению вида</RestoreTitle>
              <CheckRow><Check type="checkbox" defaultChecked />Во время паузы для ввода данных пользователем</CheckRow>
              <CheckRow><Check type="checkbox" />По окончании воспроизведения</CheckRow>
            </Restore>
            <CheckLast><Check type="checkbox" defaultChecked />Проверка несогласованности в начале воспроизведения</CheckLast>
          </MacroForm>
        </Dialog>

        <Watermark href="#channel">youtube.com/user/<span>Pashasevkav</span></Watermark>
        <Pointer width="14" height="20"><path d="M2 1v15l4-4 2 6 2-1-2-6h5z" fill="#fff" stroke="#333" /></Pointer>
      </Desktop>
    </>
  );
}
